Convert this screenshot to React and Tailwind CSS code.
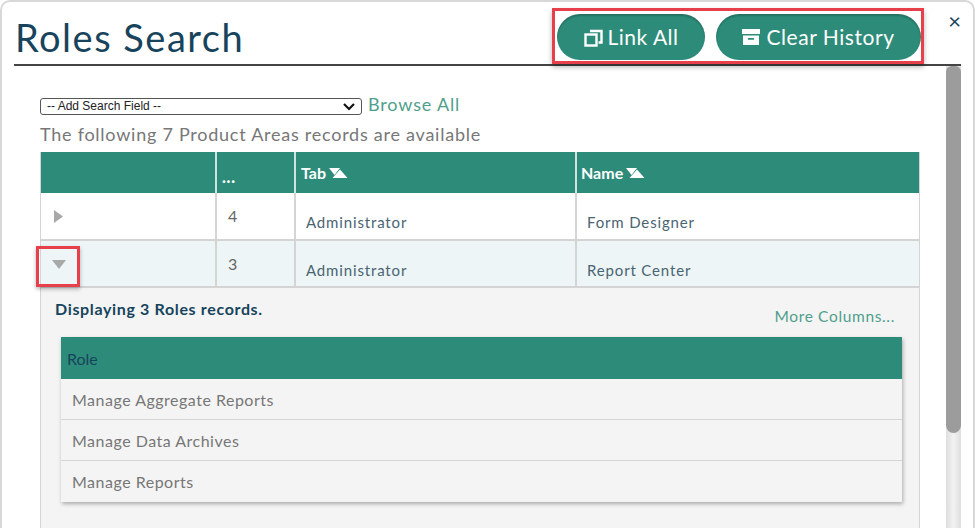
const font = { fontFamily: "Lato, sans-serif" };

function SortIcon() {
  return (
    <svg width="19" height="11" viewBox="0 0 19 11" className="ml-[3px]">
      <path d="M0 0h11L5.5 7z" fill="#fff" />
      <path d="M11 1.5L18.5 10H3.5z" fill="#fff" />
    </svg>
  );
}

function LinkIcon() {
  return (
    <svg width="19" height="19" viewBox="0 0 19 19" fill="none" stroke="#fff" strokeWidth="2.4">
      <rect x="1.5" y="6.5" width="11" height="11" />
      <path d="M6 3h11.5v11.5h-3" />
    </svg>
  );
}

function ArchiveIcon() {
  return (
    <svg width="18" height="18" viewBox="0 0 18 18" fill="#fff">
      <rect x="0" y="1" width="18" height="5" />
      <path d="M1 7.5h16V17H1zM6 10v1.8h6V10z" fillRule="evenodd" />
    </svg>
  );
}

function Row({ count, tab, name, open }) {
  return (
    <div className={`grid grid-cols-[176px_79px_281px_1fr] border-b-2 border-[#d4d4d4] ${open ? "h-[47px] bg-[#edf5f6]" : "h-[48px] bg-white"}`}>
      <div className={`pt-[17px] border-r-2 border-[#d4d4d4] ${open ? "pl-[11px]" : "pl-[13px]"}`}>
        {open ? (
          <svg width="14" height="9" viewBox="0 0 14 9" className="mt-[2px]"><path d="M0 0h14L7 9z" fill="#a8a8a8" /></svg>
        ) : (
          <svg width="9" height="13" viewBox="0 0 9 13"><path d="M0 0l9 6.5-9 6.5z" fill="#a8a8a8" /></svg>
        )}
      </div>
      <div className="pl-[11px] pt-[13px] text-[16px] leading-5 text-[#666] border-r-2 border-[#d4d4d4]">{count}</div>
      <div className="pl-[10px] pt-[19px] text-[15px] leading-5 tracking-[0.85px] text-[#4a6472] border-r-2 border-[#d4d4d4]">{tab}</div>
      <div className="pl-[10px] pt-[19px] text-[15px] leading-5 tracking-[0.85px] text-[#4a6472]">{name}</div>
    </div>
  );
}

export default function App() {
  const roles = ["Manage Aggregate Reports", "Manage Data Archives", "Manage Reports"];
  return (
    <div style={font} className="relative w-[975px] h-[528px] overflow-hidden bg-white border-2 border-b-0 border-[#d8d8d8] rounded-t-[10px]">
      <div className="ml-[12px] mr-[12px] h-[64px] flex border-b-2 border-[#444]">
        <h1 className="ml-[1px] mt-[11px] text-[38px] leading-[48px] tracking-[1.5px] text-[#17445c]">Roles Search</h1>
        <div className="ml-auto mt-[12px] flex gap-[11px] h-[46px] mr-[40px]">
          <button className="w-[148px] rounded-full bg-[#2d8c79] flex items-center justify-center gap-[5px] text-white text-[21px] tracking-[0.5px] shadow-[inset_0_2px_2px_rgba(0,0,0,0.2)]">
            <LinkIcon />Link All
          </button>
          <button className="w-[205px] rounded-full bg-[#2d8c79] flex items-center justify-center gap-[6px] text-white text-[21px] tracking-[0.55px] shadow-[inset_0_2px_2px_rgba(0,0,0,0.2)]">
            <ArchiveIcon />Clear History
          </button>
        </div>
        <div className="absolute right-[12px] top-[9px] text-[22px] leading-5 text-[#17445c]">×</div>
      </div>

      <div className="flex h-[462px]">
        <div className="w-[944px] pl-[38px] pt-[31px]">
          <div className="flex items-center h-[19px] gap-[6px]">
            <div className="relative w-[322px] h-[17px]">
              <select className="block appearance-none w-full h-full border border-[#555] rounded-[3px] bg-white text-[12px] leading-[15px] text-[#222] pl-[6px]" style={{ fontFamily: "Liberation Sans, sans-serif" }}>
                <option>-- Add Search Field --</option>
              </select>
              <svg width="12" height="8" viewBox="0 0 12 8" className="absolute right-[7px] top-[5px]" fill="none" stroke="#111" strokeWidth="2.2">
                <path d="M1 1l5 5 5-5" />
              </svg>
            </div>
            <a className="-mt-[5px] text-[18px] leading-5 tracking-[0.85px] text-[#4f9f8c]">Browse All</a>
          </div>
          <p className="mt-[7px] text-[18px] leading-[22px] tracking-[0.75px] text-[#777]">The following 7 Product Areas records are available</p>

          <div className="mt-[7px] border-x border-[#d4d4d4] w-[880px] h-[400px] bg-[#f4f4f4]">
            <div className="grid grid-cols-[176px_79px_281px_1fr] h-[41px] bg-[#2d8c79] text-white text-[16px] font-bold">
              <div className="border-r-2 border-[#cfe3de]" />
              <div className="pl-[5px] pt-[13px] font-black tracking-[0.8px] border-r-2 border-[#cfe3de]">...</div>
              <div className="pl-[5px] pt-[9px] flex items-start border-r-2 border-[#cfe3de]">Tab<span className="mt-[7px]"><SortIcon /></span></div>
              <div className="pl-[4px] pt-[9px] flex items-start">Name<span className="mt-[7px]"><SortIcon /></span></div>
            </div>
            <Row count="4" tab="Administrator" name="Form Designer" />
            <Row count="3" tab="Administrator" name="Report Center" open />

            <div className="px-[20px] pt-[11px]">
              <div className="flex items-start justify-between">
                <span className="-ml-[6px] text-[16px] leading-5 font-bold tracking-[0.65px] text-[#17445c]">Displaying 3 Roles records.</span>
                <a className="mr-[4px] mt-[7px] text-[15.5px] leading-5 tracking-[0.65px] text-[#4f9f8c]">More Columns...</a>
              </div>
              <div className="mt-[11px] w-[841px] shadow-[1px_2px_4px_rgba(0,0,0,0.3)]">
                <div className="h-[42px] pl-[6px] pt-[12px] bg-[#2d8c79] text-[16px] leading-5 text-[#17445c]">Role</div>
                {roles.map((r) => (
                  <div key={r} className="h-[41px] pl-[11px] pt-[11px] border-b border-[#d4d4d4] last:border-b-0 bg-[#f4f4f4] text-[16px] leading-5 tracking-[0.5px] text-[#777]">{r}</div>
                ))}
              </div>
            </div>
          </div>
        </div>
        <div className="w-[15px] h-full bg-gradient-to-r from-[#dedede] via-[#f2f2f2] to-[#dedede]">
          <div className="h-[367px] bg-[#9c9c9c] rounded-b-lg rounded-t-md" />
        </div>
      </div>

      <div className="absolute left-[550px] top-[6px] w-[372px] h-[56px] border-[3px] border-[#e8404a] shadow-[0_3px_5px_rgba(0,0,0,0.3)]" />
      <div className="absolute left-[34px] top-[244px] w-[44px] h-[41px] border-[3px] border-[#e8404a] shadow-[0_2px_4px_rgba(0,0,0,0.3)]" />
    </div>
  );
}
